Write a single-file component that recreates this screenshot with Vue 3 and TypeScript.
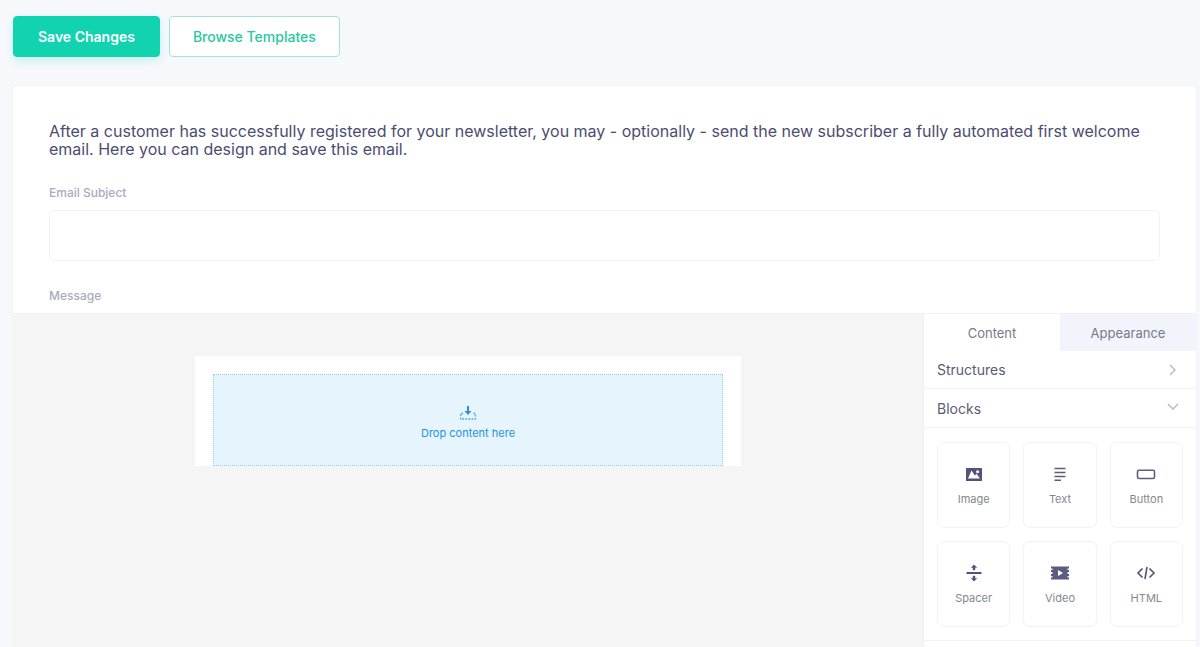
<script setup lang="ts">
import { ref } from 'vue'

type Tab = 'Content' | 'Appearance'
type Icon = 'image' | 'text' | 'button' | 'spacer' | 'video' | 'html'

const tabs: Tab[] = ['Content', 'Appearance']
const activeTab = ref<Tab>('Content')
const subject = ref('')
const blocks: { label: string; icon: Icon }[] = [
  { label: 'Image', icon: 'image' },
  { label: 'Text', icon: 'text' },
  { label: 'Button', icon: 'button' },
  { label: 'Spacer', icon: 'spacer' },
  { label: 'Video', icon: 'video' },
  { label: 'HTML', icon: 'html' },
]
</script>

<template>
  <main class="page">
    <div class="actions">
      <button type="button" class="btn primary">Save Changes</button>
      <button type="button" class="btn outline">Browse Templates</button>
    </div>

    <section class="card">
      <div class="form">
        <p class="intro">
          After a customer has successfully registered for your newsletter, you may - optionally - send the new
          subscriber a fully automated first welcome email. Here you can design and save this email.
        </p>
        <label class="label" for="subject">Email Subject</label>
        <input id="subject" v-model="subject" class="subject" type="text" />
        <h2 id="message" class="label">Message</h2>
      </div>

      <div class="editor" role="group" aria-labelledby="message">
        <div class="canvas">
          <div class="email">
            <div class="dropzone">
              <svg width="18" height="16" viewBox="0 0 18 16" aria-hidden="true">
                <path d="M9 1v6" fill="none" stroke="#2b93da" stroke-width="2" />
                <path d="M5.500 6h7L9 10z" fill="#2b93da" />
                <path d="M4 8.500H1.700V14h14.600V8.500H14" fill="none" stroke="#4aa5e2" stroke-width="1.400" stroke-dasharray="1.800 1.300" />
              </svg>
              <span>Drop content here</span>
            </div>
          </div>
        </div>

        <aside class="sidebar">
          <div class="tabs" role="tablist">
            <button
              v-for="tab in tabs"
              :key="tab"
              type="button"
              role="tab"
              class="tab"
              :class="{ active: tab === activeTab }"
              :aria-selected="tab === activeTab"
              @click="activeTab = tab"
            >{{ tab }}</button>
          </div>
          <button type="button" class="section first" aria-expanded="false">
            <span>Structures</span>
            <svg width="12" height="12" viewBox="0 0 12 12" aria-hidden="true">
              <path d="M3 1l5 5-5 5" fill="none" stroke="#b5b7bd" stroke-width="1.300" />
            </svg>
          </button>
          <button type="button" class="section" aria-expanded="true">
            <span>Blocks</span>
            <svg width="12" height="12" viewBox="0 0 12 12" aria-hidden="true">
              <path d="M1 2l5 5 5-5" fill="none" stroke="#b5b7bd" stroke-width="1.300" />
            </svg>
          </button>
          <div class="blocks">
            <button v-for="block in blocks" :key="block.label" type="button" class="block">
              <svg width="20" height="18" viewBox="0 0 20 18" aria-hidden="true">
                <template v-if="block.icon === 'image'">
                  <rect x="2" y="3" width="16" height="13" rx="0.500" fill="#515379" />
                  <path d="M4 13.500L7.500 5.500l3.300 5 1.700-1.700 3.500 4.700z" fill="#fff" />
                  <circle cx="13.600" cy="6.800" r="1.500" fill="#fff" />
                </template>
                <path
                  v-else-if="block.icon === 'text'"
                  d="M4.500 3.500h11M4.500 7.500h11M4.500 11.500h11M4.500 15.200h6.500"
                  fill="none" stroke="#5c5e78" stroke-width="1.600"
                />
                <rect
                  v-else-if="block.icon === 'button'"
                  x="1.500" y="5.300" width="17" height="8.200" rx="1.500"
                  fill="none" stroke="#5c5e80" stroke-width="1.600"
                />
                <template v-else-if="block.icon === 'spacer'">
                  <path d="M2.500 9h15" stroke="#515379" stroke-width="2" />
                  <path d="M10 .8L12.800 3.600h-1.800V6H9V3.600H7.200zM10 17.200L7.200 14.400H9V12h2v2.400h1.800z" fill="#515379" stroke="#515379" stroke-width=".4" />
                </template>
                <template v-else-if="block.icon === 'video'">
                  <path d="M1 2.500h18v2h-1.500v1.500H19v2h-1.500v2H19v2h-1.500v1.500H19v2H1v-2h1.500V12H1v-2h1.500V8H1V6h1.500V4.500H1z" fill="#5a5c82" />
                  <path d="M8 6v6l5-3z" fill="#fff" />
                </template>
                <path
                  v-else
                  d="M6.500 4.500L2 9l4.500 4.500M13.500 4.500L18 9l-4.500 4.500M11 3L9 15"
                  fill="none" stroke="#515379" stroke-width="1.600"
                />
              </svg>
              <span>{{ block.label }}</span>
            </button>
          </div>
        </aside>
      </div>
    </section>
  </main>
</template>

<style>
body {
  margin: 0;
  background: #f6f8fc;
}
</style>

<style scoped>
.page {
  box-sizing: border-box;
  min-height: 100vh;
  display: flex;
  flex-direction: column;
  gap: 29px;
  padding: 16px 4px 0 13px;
  background: #f6f8fc;
  color: #4b4d70;
  font-family: Inter, "Liberation Sans", sans-serif;
}

button,
input {
  box-sizing: border-box;
  margin: 0;
  font: inherit;
}

button {
  cursor: pointer;
}

.actions {
  display: flex;
  gap: 9px;
}

.btn {
  height: 41px;
  padding: 0 23px;
  border: 1px solid #12d3b0;
  border-radius: 4px;
  font-size: 14px;
  line-height: 18px;
}

.primary {
  padding: 0 24px;
  background: #12d3b0;
  color: #fff;
  font-weight: 600;
  box-shadow: 0 4px 10px rgba(18, 211, 176, 0.18);
}

.outline {
  border-color: #a0e6d6;
  background: #fff;
  color: #27c8a1;
  font-weight: 500;
}

.card {
  flex: 1;
  display: flex;
  flex-direction: column;
  background: #fff;
  border-radius: 4px 4px 0 0;
  box-shadow: 0 0 2px rgba(70, 80, 120, 0.1);
}

.form {
  padding: 36px 36px 9px;
}

.intro {
  margin: 0 0 27px;
  font-size: 16px;
  line-height: 18px;
}

.label {
  display: block;
  margin: 0;
  font-size: 12px;
  font-weight: 500;
  line-height: 16px;
  color: #a8abbd;
}

.subject {
  display: block;
  width: 100%;
  height: 51px;
  margin: 9px 0 27px;
  padding: 0 16px;
  border: 1px solid #f0f2f8;
  border-radius: 5px;
  background: #fff;
  color: inherit;
  font-size: 14px;
}

.editor {
  flex: 1;
  display: flex;
  border-top: 1px solid #eff1f4;
}

.canvas {
  flex: 1;
  padding-top: 42px;
  background: #f5f5f5;
}

.email {
  box-sizing: border-box;
  width: 60%;
  margin: 0 auto;
  padding: 18px 18px 0;
  background: #fff;
}

.dropzone {
  box-sizing: border-box;
  height: 92px;
  display: flex;
  flex-direction: column;
  align-items: center;
  justify-content: center;
  gap: 4px;
  padding-top: 5px;
  border: 1px dotted #93cbef;
  background: #e6f4fe;
  color: #2293dc;
  font-size: 11px;
  line-height: 16px;
}

.sidebar {
  box-sizing: border-box;
  width: 273px;
  border-left: 1px solid #f0f1f5;
  background: #fff;
}

.tabs {
  display: flex;
}

.tab {
  flex: 1;
  height: 37px;
  padding: 0;
  border: 0;
  background: #f2f4fb;
  color: #77798a;
  font-size: 13px;
}

.tab.active {
  background: #fff;
}

.section {
  width: 100%;
  height: 39px;
  display: flex;
  align-items: center;
  justify-content: space-between;
  padding: 0 17px 0 13px;
  border: 0;
  border-bottom: 1px solid #f0f2f5;
  background: #fff;
  color: #5a5c72;
  font-size: 14px;
}

.section.first {
  height: 38px;
}

.blocks {
  display: grid;
  grid-template-columns: repeat(3, 1fr);
  gap: 13px;
  padding: 14px 13px 13px;
  border-bottom: 1px solid #f0f2f5;
}

.block {
  height: 86px;
  display: flex;
  flex-direction: column;
  align-items: center;
  justify-content: center;
  gap: 8px;
  padding: 2px 0 0;
  border: 1px solid #f2f3f6;
  border-radius: 7px;
  background: #fff;
  color: #85878f;
  font-size: 11px;
  line-height: 16px;
}
</style>
